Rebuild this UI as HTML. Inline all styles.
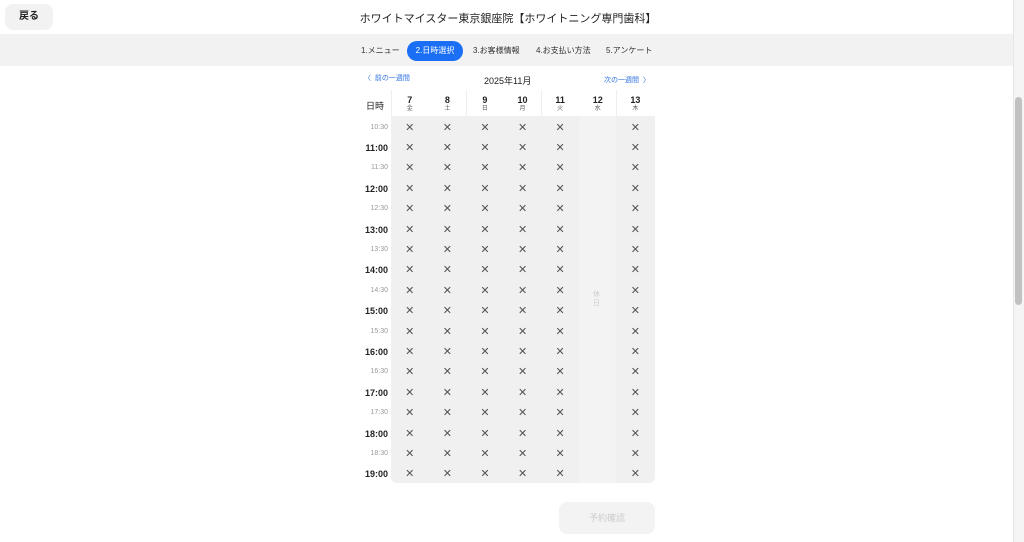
<!DOCTYPE html>
<html><head><meta charset="utf-8"><style>
*{margin:0;padding:0;box-sizing:border-box}
body{width:1024px;height:542px;overflow:hidden;background:#fff;font-family:"Liberation Sans","Noto Sans CJK JP",sans-serif;color:#222;position:relative}
.abs{position:absolute}
.back{left:5px;top:4px;width:48px;height:26px;background:#f2f2f2;border-radius:8px;font-size:10px;font-weight:bold;text-align:center;line-height:26px}
.title{left:0;width:1014px;top:10px;text-align:center;font-size:11px;font-weight:normal;padding-left:2px}
.nav{left:0;top:34px;width:1014px;height:32px;background:#f2f2f2}
.step{top:45px;font-size:8px;color:#333}
.active{left:407px;top:41px;width:56px;height:20px;background:#1a6ff5;border-radius:10px;color:#fff;font-size:8px;text-align:center;line-height:20px}
.lnk{font-size:7px;color:#2f6fe0;top:73px}
.grid{left:391px;top:116px;width:264px;height:367px;background:#f0f0f0;border-radius:0 0 6px 6px}
.hd{top:95px;width:37.5px;text-align:center;font-size:9px;font-weight:bold;line-height:10px}
.hd small{display:block;font-size:6px;font-weight:normal;color:#555;line-height:9px}
.t{left:358px;width:30px;text-align:right;font-size:7px;color:#999}
.t.b{font-size:9px;color:#222;font-weight:bold}
.x{width:37.5px;text-align:center;font-size:11px;color:#555}
.sep{top:90px;width:1px;height:26px;background:#eee}
</style></head><body>
<div class="abs back">戻る</div>
<div class="abs title">ホワイトマイスター東京銀座院【ホワイトニング専門歯科】</div>
<div class="abs nav"></div>
<div class="abs step" style="left:361px">1.メニュー</div>
<div class="abs active">2.日時選択</div>
<div class="abs step" style="left:473px">3.お客様情報</div>
<div class="abs step" style="left:536px">4.お支払い方法</div>
<div class="abs step" style="left:606px">5.アンケート</div>
<div class="abs lnk" style="left:364px">〈&nbsp; 前の一週間</div>
<div class="abs" style="left:484px;top:74px;font-size:9px">2025年11月</div>
<div class="abs lnk" style="left:604px;top:75px">次の一週間 &nbsp;〉</div>
<div class="abs" style="left:366px;top:99px;font-size:9px">日時</div>
<div class="abs grid"></div>
<div class="abs" style="left:579px;top:116px;width:37px;height:367px;background:#f3f3f3"></div>
<div class="abs" style="left:593px;top:290px;font-size:7px;color:#ccc;line-height:9px;width:10px">休日</div>
<div class="abs sep" style="left:391px"></div><div class="abs sep" style="left:466px"></div><div class="abs sep" style="left:541px"></div><div class="abs sep" style="left:616px"></div>
<div id="c"></div>
<div class="abs" style="left:559px;top:502px;width:96px;height:32px;background:#f3f3f3;border-radius:8px;font-size:9px;color:#ccc;text-align:center;line-height:32px">予約確認</div>
<div class="abs" style="left:1013px;top:0;width:11px;height:542px;background:#f5f5f5;border-left:1px solid #e6e6e6"></div>
<div class="abs" style="left:1015px;top:97px;width:7px;height:208px;background:#c1c1c1;border-radius:4px"></div>
<script>
var h='',d=[["7","金"],["8","土"],["9","日"],["10","月"],["11","火"],["12","水"],["13","木"]];
d.forEach(function(a,i){h+='<div class="abs hd" style="left:'+(391+i*37.6)+'px">'+a[0]+'<small>'+a[1]+'</small></div>';});
for(var r=0;r<18;r++){var y=127.5+r*20.4,m=r%2==0,hr=10+Math.floor((r+1)/2);var lbl=hr+(m?':30':':00');
h+='<div class="abs t'+(m?'':' b')+'" style="top:'+(y-(m?4:5))+'px">'+lbl+'</div>';
for(var i=0;i<7;i++){if(i==5)continue;h+='<div class="abs x" style="left:'+(391+i*37.6)+'px;top:'+(y-7)+'px">✕</div>';}}
document.getElementById('c').innerHTML=h;
</script>
</body></html>
